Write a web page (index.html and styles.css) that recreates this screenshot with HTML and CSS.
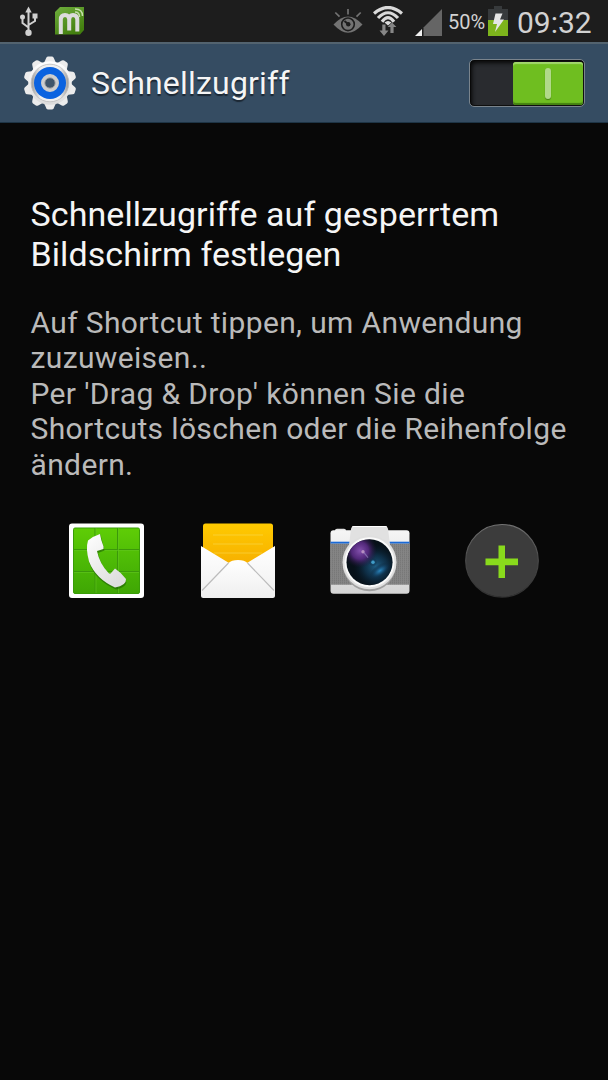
FILE: index.html
```html
<!DOCTYPE html>
<html lang="de">
<head>
    <meta charset="UTF-8">
    <meta name="viewport" content="width=device-width, initial-scale=1.0">
    <title>Schnellzugriff</title>
    <link rel="stylesheet" href="styles.css">
</head>
<body>
    <div class="statusbar">
        <svg class="icon-usb" width="20" height="30" viewBox="0 0 20 30">
            <path d="M9.500 4v20M9.500 21.500L3.500 17V11M9.500 19L16 15V9" fill="none" stroke="#d0d0d0" stroke-width="2"/>
            <path d="M9.500 0.500l3.200 6H6.300z" fill="#d0d0d0"/>
            <circle cx="9.500" cy="26.700" r="3.200" fill="#d0d0d0"/>
            <circle cx="3.500" cy="11" r="2.500" fill="#d0d0d0"/>
            <rect x="13.500" y="7.500" width="5" height="5" fill="#d0d0d0"/>
        </svg>
        <svg class="icon-app" width="29" height="28" viewBox="0 0 29 28">
            <defs>
                <linearGradient id="app" x1="0" y1="0" x2="0.600" y2="1">
                    <stop offset="0" stop-color="#6fae3d"/>
                    <stop offset="1" stop-color="#437f0f"/>
                </linearGradient>
            </defs>
            <path d="M5 0H29V23L25 27.500H0V5z" fill="url(#app)"/>
            <path d="M5.800 27V12.500Q5.800 8 10 8Q14.200 8 14.200 12.500V23.500M14.200 12.500Q14.200 8 18 8Q22.300 8 22.300 12.500V24.500" fill="none" stroke="#dcdcdc" stroke-width="4"/>
            <path d="M20 5Q24.500 5 24.500 10M20 2Q27.500 2 27.500 9" fill="none" stroke="#c5dfaa" stroke-width="1.500"/>
        </svg>
        <svg class="icon-eye" width="30" height="26" viewBox="0 0 30 26">
            <path d="M0.500 15.500Q8 7.500 15 7.500T29.500 15.500Q22 23.700 15 23.700T0.500 15.500z" fill="#737373"/>
            <circle cx="15" cy="15.300" r="6.300" fill="#737373" stroke="#1d1d1d" stroke-width="1.600"/>
            <path d="M11.500 12l3.500 3" stroke="#1d1d1d" stroke-width="2"/>
            <circle cx="15.300" cy="15.300" r="2.200" fill="#1d1d1d"/>
            <path d="M15 0v5.500M2.300 3.500l4.200 4.200M27.700 3.500l-4.200 4.200" stroke="#737373" stroke-width="1.700"/>
        </svg>
        <svg class="icon-wifi" width="30" height="31" viewBox="0 0 30 31">
            <g fill="none" stroke="#dadada" stroke-width="3.200">
                <path d="M1 7.500Q15-4.500 29 7.500"/>
                <path d="M5 12Q15 1.500 25 12"/>
                <path d="M9 15.800Q15 7.500 21 15.800"/>
            </g>
            <path d="M11.500 16.500Q15 13.500 18.500 16.500L15 19.500z" fill="#dadada"/>
            <path d="M9.300 18.500h3.200v6h3L11 30l-4.500-5.500h2.800z" fill="#868686"/>
            <path d="M17.400 27h3.200v-6h2.800L19 16.500 14.600 21h2.800z" fill="#868686"/>
        </svg>
        <svg class="icon-signal" width="28" height="28" viewBox="0 0 28 28">
            <path d="M27 0V27H8.500V18.500z" fill="#656565"/>
            <path d="M7 20V27H0z" fill="#f0f0f0"/>
        </svg>
        <span class="percent">50%</span>
        <svg class="icon-battery" width="20" height="30" viewBox="0 0 20 30">
            <path d="M6 0h8v3h6v27H0V3h6z" fill="#373a3c"/>
            <path d="M0 14h20v16H0z" fill="#7db41c"/>
            <path d="M7.500 7.500h7L12 13.500h4L7 26 9 18H5z" fill="#e6e6e6"/>
        </svg>
        <span class="clock">09:32</span>
    </div>

    <div class="header">
        <svg class="icon-gear" width="56" height="56" viewBox="-28 -28 56 56">
            <defs>
                <linearGradient id="metal" x1="0" y1="0" x2="0" y2="1">
                    <stop offset="0" stop-color="#ffffff"/>
                    <stop offset="1" stop-color="#dcdcdc"/>
                </linearGradient>
                <linearGradient id="ring" x1="0" y1="0" x2="1" y2="0">
                    <stop offset="0" stop-color="#9b9b9b"/>
                    <stop offset="0.250" stop-color="#efefef"/>
                    <stop offset="0.750" stop-color="#efefef"/>
                    <stop offset="1" stop-color="#9b9b9b"/>
                </linearGradient>
                <path id="tooth" d="M-6.500-19L-3.700-25.200Q-3-26.500-1.800-26.500H1.800Q3-26.500 3.700-25.200L6.500-19z"/>
            </defs>
            <g fill="#ececec">
                <use href="#tooth"/>
                <use href="#tooth" transform="rotate(36)"/>
                <use href="#tooth" transform="rotate(72)"/>
                <use href="#tooth" transform="rotate(108)"/>
                <use href="#tooth" transform="rotate(144)"/>
                <use href="#tooth" transform="rotate(180)"/>
                <use href="#tooth" transform="rotate(216)"/>
                <use href="#tooth" transform="rotate(252)"/>
                <use href="#tooth" transform="rotate(288)"/>
                <use href="#tooth" transform="rotate(324)"/>
            </g>
            <circle r="21.800" fill="url(#metal)"/>
            <circle r="18.800" fill="url(#ring)" stroke="#bcbcbc" stroke-width="0.800"/>
            <circle r="16" fill="#0b63e0"/>
            <circle r="7" fill="#40566b" stroke="#cecece" stroke-width="4"/>
            <circle r="5.200" fill="none" stroke="#969696" stroke-width="0.800"/>
        </svg>
        <h1 class="title">Schnellzugriff</h1>
        <div class="switch">
            <div class="knob"><span class="mark"></span></div>
        </div>
    </div>

    <div class="content">
        <h2 class="headline">Schnellzugriffe auf gesperrtem<br>Bildschirm festlegen</h2>
        <p class="description">Auf Shortcut tippen, um Anwendung<br>zuzuweisen..<br>Per 'Drag &amp; Drop' können Sie die<br>Shortcuts löschen oder die Reihenfolge<br>ändern.</p>
    </div>

    <div class="shortcuts">
        <svg width="80" height="80" viewBox="0 0 80 80">
            <defs>
                <linearGradient id="green" x1="0" y1="0" x2="0" y2="1">
                    <stop offset="0" stop-color="#5fcd06"/>
                    <stop offset="0.500" stop-color="#4dba06"/>
                    <stop offset="1" stop-color="#3fa604"/>
                </linearGradient>
                <linearGradient id="handset" x1="0" y1="0" x2="0.600" y2="1">
                    <stop offset="0" stop-color="#ffffff"/>
                    <stop offset="1" stop-color="#dedede"/>
                </linearGradient>
            </defs>
            <rect x="3" y="3.500" width="75" height="74.500" rx="3" fill="#fff"/>
            <rect x="7.500" y="8" width="66" height="65.500" rx="1.500" fill="url(#green)" stroke="#399d08"/>
            <path d="M29 8v65M51.500 8v65M8 29.500h65M8 51.500h65" stroke="#3b980a" stroke-width="1"/>
            <path d="M30 8v65M52.500 8v65M8 30.500h65M8 52.500h65" stroke="#62c620" stroke-width="0.600"/>
            <path d="M22 20Q27 15 34 13L38 29L31.500 31.500Q34 44 43 53.500L49 48L60 60.500Q59 66 49.500 68Q29 59 23 42Q20 29 22 20z" transform="translate(0.500 1.500)" fill="#246c04" opacity="0.700"/>
            <path d="M21.500 20Q27 15.500 33.500 13.500Q34.500 20 37 26V28.500L30.500 30.500Q33 43 42 52.500Q44 54 45 52L48.500 48Q54 51.500 59.500 58.500Q60 65 48.500 67Q29 58 22.500 41Q19 28 21.500 20z" transform="translate(0.500 0.500)" fill="url(#handset)"/>
        </svg>
        <svg width="80" height="80" viewBox="0 0 80 80">
            <defs>
                <linearGradient id="yellow" x1="0" y1="0" x2="0" y2="1">
                    <stop offset="0" stop-color="#ffca00"/>
                    <stop offset="1" stop-color="#f5aa00"/>
                </linearGradient>
                <linearGradient id="paper" x1="0" y1="0" x2="0" y2="1">
                    <stop offset="0" stop-color="#ffffff"/>
                    <stop offset="1" stop-color="#efefef"/>
                </linearGradient>
            </defs>
            <rect x="5" y="3.500" width="70" height="50" rx="2.500" fill="url(#yellow)"/>
            <path d="M15 15h50M15 24h50M16 33h48" stroke="#fadc55" stroke-width="0.800" opacity="0.700"/>
            <path d="M3 26L31 43H49L77 26V75.500Q77 78 74.500 78H5.500Q3 78 3 75.500z" fill="url(#paper)"/>
            <path d="M3.500 71L30.500 43Q33.500 40 40 40T49.500 43L76.500 71V75.500Q76.500 77.500 74.500 77.500H5.500Q3.500 77.500 3.500 75.500z" fill="url(#paper)"/>
            <path d="M4 70.500L30.500 43M49.500 43L76 70.500" stroke="#bcbcbc" stroke-width="1.200"/>
        </svg>
        <svg width="80" height="80" viewBox="0 0 80 80">
            <defs>
                <linearGradient id="silver" x1="0" y1="0" x2="0" y2="1">
                    <stop offset="0" stop-color="#f6f6f6"/>
                    <stop offset="1" stop-color="#d4d4d4"/>
                </linearGradient>
                <pattern id="grip" width="2" height="2" patternUnits="userSpaceOnUse">
                    <rect width="2" height="2" fill="#858585"/>
                    <rect width="1" height="1" fill="#727272"/>
                </pattern>
                <radialGradient id="violet">
                    <stop offset="0" stop-color="#8350ad"/>
                    <stop offset="0.500" stop-color="#592a83" stop-opacity="0.900"/>
                    <stop offset="1" stop-color="#241238" stop-opacity="0"/>
                </radialGradient>
                <radialGradient id="blue">
                    <stop offset="0" stop-color="#2b86bd"/>
                    <stop offset="0.500" stop-color="#15496f" stop-opacity="0.800"/>
                    <stop offset="1" stop-color="#0a1e30" stop-opacity="0"/>
                </radialGradient>
                <clipPath id="lens"><circle cx="39.500" cy="38.500" r="23"/></clipPath>
            </defs>
            <g transform="translate(0 3.700)">
                <path d="M5 8V6.500Q5 5 7 5H14Q16 5 16 6.500V8z" fill="#e4e4e4"/>
                <rect x="0.500" y="6.500" width="79" height="63.500" rx="3" fill="url(#silver)"/>
                <rect x="0.500" y="18" width="79" height="2" fill="#1969d6"/>
                <rect x="0.500" y="20" width="79" height="41" fill="url(#grip)"/>
                <path d="M17.500 33L21 5Q21.500 2.300 24 2.300H55Q57.500 2.300 58 5L61.500 33z" fill="#e1e1e1"/>
                <path d="M22 3.300Q22.500 2.800 24 2.800H55Q56.500 2.800 57 3.300" fill="none" stroke="#fff" stroke-width="1"/>
                <circle cx="39.500" cy="41" r="26.500" fill="#a0a0a0"/>
                <circle cx="39.500" cy="38.500" r="27" fill="#dfdfdf"/>
                <circle cx="39.500" cy="38.500" r="25" fill="#fafafa"/>
                <circle cx="39.500" cy="38.500" r="23" fill="#071119"/>
                <g clip-path="url(#lens)">
                    <circle cx="46" cy="43" r="23" fill="url(#blue)" opacity="0.650"/>
                    <circle cx="30" cy="27" r="17" fill="url(#violet)"/>
                    <ellipse cx="50" cy="47" rx="12" ry="6" fill="url(#blue)" transform="rotate(-35 50 47)"/>
                    <circle cx="43" cy="38.500" r="4" fill="url(#blue)"/>
                    <circle cx="43" cy="38.500" r="1.700" fill="#48a9d2" opacity="0.800"/>
                    <circle cx="33" cy="28" r="1.700" fill="#d4b1d3" opacity="0.700"/>
                    <path d="M34 29L38 34" stroke="#9b8fc5" stroke-width="1.200" opacity="0.600"/>
                </g>
            </g>
        </svg>
        <svg width="80" height="80" viewBox="0 0 80 80">
            <defs>
                <linearGradient id="rim" x1="0" y1="0" x2="0" y2="1">
                    <stop offset="0" stop-color="#727272"/>
                    <stop offset="0.500" stop-color="#484848"/>
                    <stop offset="1" stop-color="#303030"/>
                </linearGradient>
            </defs>
            <circle cx="40" cy="40.800" r="36.300" fill="#3c3c3c" stroke="url(#rim)" stroke-width="1.200"/>
            <path d="M36.500 25.500h6.500v13h13v6.700H43V58h-6.500V45.200H23.500v-6.700h13z" fill="#89da1c"/>
        </svg>
    </div>
</body>
</html>
```
FILE: styles.css
```css
* {
    box-sizing: border-box;
}
body {
    margin: 0;
    height: 1080px;
    overflow: hidden;
    background-color: #080808;
    color: #f5f5f5;
    font-family: Roboto, "Liberation Sans", sans-serif;
}
svg {
    display: block;
    flex: none;
}
.statusbar {
    display: flex;
    align-items: flex-start;
    height: 42px;
    padding: 6px 16px 0 19px;
    background-color: #1d1d1d;
    color: #d2d2d2;
}
.icon-app {
    margin: 1px 0 0 16px;
}
.icon-eye {
    margin: 3px 0 0 auto;
}
.icon-wifi {
    margin-left: 10px;
}
.icon-signal {
    margin: 3px 5px 0 12px;
}
.percent {
    width: 40px;
    font-size: 20px;
    line-height: 32px;
}
.clock {
    width: 75px;
    margin-left: 9px;
    font-size: 30px;
    line-height: 34px;
    white-space: nowrap;
}
.header {
    display: flex;
    align-items: center;
    height: 81px;
    padding: 0 23px 0 22px;
    background-color: #354c62;
    border-top: 2px solid #53636f;
    border-bottom: 1px solid #1e3445;
}
.title {
    margin: 0 auto 0 13px;
    font-size: 32px;
    font-weight: 400;
    line-height: 40px;
    letter-spacing: 0.2px;
    text-shadow: 0 2px 1px #1b2733;
}
.switch {
    display: flex;
    align-items: center;
    justify-content: flex-end;
    width: 116px;
    height: 48px;
    padding: 1px;
    border: 1px solid #7a848c;
    border-radius: 5px;
    background-color: #292b2f;
    box-shadow: inset 2px 3px 4px #080808, inset 0 0 0 1px #101010;
}
.knob {
    display: flex;
    align-items: center;
    justify-content: center;
    width: 70px;
    height: 43px;
    border-radius: 3px;
    background-color: #6fbe20;
    box-shadow: inset 0 2px 1px #a2d66d, inset 0 -2px 1px #438010;
}
.mark {
    width: 6px;
    height: 31px;
    border-radius: 3px;
    background-color: #b1d98a;
    box-shadow: 0 1px 1px #447e13;
}
.content {
    padding: 71px 30px 0 30.5px;
}
.headline {
    margin: 0;
    font-size: 34px;
    font-weight: 400;
    line-height: 40px;
    letter-spacing: 0.08px;
    white-space: nowrap;
}
.description {
    margin: 31px 0 0;
    color: #bababa;
    font-size: 30px;
    line-height: 35.4px;
    letter-spacing: 0.36px;
    white-space: nowrap;
}
.shortcuts {
    display: flex;
    justify-content: space-between;
    padding: 38px 66px 0;
}
```
